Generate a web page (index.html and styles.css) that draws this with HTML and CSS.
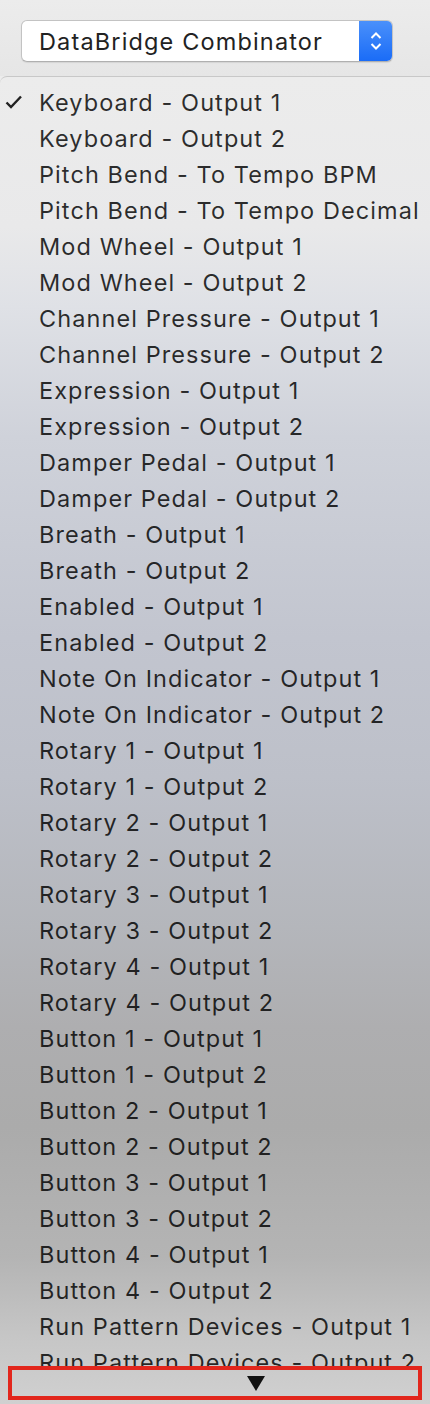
FILE: index.html
```html
<!DOCTYPE html>
<html>
<head>
<meta charset="utf-8">
<link rel="stylesheet" href="styles.css">
</head>
<body>
<div class="top">
  <div class="popup">
    <span class="popup-label">DataBridge Combinator</span>
    <span class="popup-btn">
      <svg width="14" height="22" viewBox="0 0 14 22"><path d="M2.5 8 L7 3.5 L11.5 8 M2.5 14 L7 18.5 L11.5 14" fill="none" stroke="#fff" stroke-width="2"/></svg>
    </span>
  </div>
</div>
<div class="menu">
  <ul class="list">
    <li class="item checked"><svg class="check" width="18" height="14" viewBox="0 0 18 14"><path d="M1.5 7.5 L6 12 L16 1.5" fill="none" stroke="#222" stroke-width="2.4"/></svg>Keyboard - Output 1</li>
    <li class="item">Keyboard - Output 2</li>
    <li class="item">Pitch Bend - To Tempo BPM</li>
    <li class="item">Pitch Bend - To Tempo Decimal</li>
    <li class="item">Mod Wheel - Output 1</li>
    <li class="item">Mod Wheel - Output 2</li>
    <li class="item">Channel Pressure - Output 1</li>
    <li class="item">Channel Pressure - Output 2</li>
    <li class="item">Expression - Output 1</li>
    <li class="item">Expression - Output 2</li>
    <li class="item">Damper Pedal - Output 1</li>
    <li class="item">Damper Pedal - Output 2</li>
    <li class="item">Breath - Output 1</li>
    <li class="item">Breath - Output 2</li>
    <li class="item">Enabled - Output 1</li>
    <li class="item">Enabled - Output 2</li>
    <li class="item">Note On Indicator - Output 1</li>
    <li class="item">Note On Indicator - Output 2</li>
    <li class="item">Rotary 1 - Output 1</li>
    <li class="item">Rotary 1 - Output 2</li>
    <li class="item">Rotary 2 - Output 1</li>
    <li class="item">Rotary 2 - Output 2</li>
    <li class="item">Rotary 3 - Output 1</li>
    <li class="item">Rotary 3 - Output 2</li>
    <li class="item">Rotary 4 - Output 1</li>
    <li class="item">Rotary 4 - Output 2</li>
    <li class="item">Button 1 - Output 1</li>
    <li class="item">Button 1 - Output 2</li>
    <li class="item">Button 2 - Output 1</li>
    <li class="item">Button 2 - Output 2</li>
    <li class="item">Button 3 - Output 1</li>
    <li class="item">Button 3 - Output 2</li>
    <li class="item">Button 4 - Output 1</li>
    <li class="item">Button 4 - Output 2</li>
    <li class="item">Run Pattern Devices - Output 1</li>
    <li class="item">Run Pattern Devices - Output 2</li>
  </ul>
  <div class="scroller">
    <div class="scroll-box"><span class="arrow"></span></div>
  </div>
</div>
</body>
</html>
```
FILE: styles.css
```css
html, body {
  margin: 0;
  padding: 0;
}
body {
  width: 430px;
  height: 1404px;
  overflow: hidden;
  background: #ececec;
  font-family: Inter, "Noto Sans", "Liberation Sans", sans-serif;
}
.top {
  height: 76px;
  box-sizing: border-box;
  padding: 20px 0 0 21px;
  background: linear-gradient(#ececec, #e6e6e6);
}
.popup {
  width: 372px;
  height: 42px;
  box-sizing: border-box;
  display: flex;
  align-items: stretch;
  background: #fff;
  border: 1px solid #c3c3c3;
  border-bottom-color: #b0b0b0;
  border-radius: 6px;
  overflow: hidden;
  box-shadow: 0 1px 1px rgba(0,0,0,0.08);
}
.popup-label {
  flex: 1;
  display: flex;
  align-items: center;
  padding-left: 17px;
  font-size: 23.5px;
  letter-spacing: 1.15px;
  color: #222;
}
.popup-btn {
  width: 33px;
  display: flex;
  align-items: center;
  justify-content: center;
  background: linear-gradient(#4a90fb, #1a6cf7);
}
.menu {
  border-top: 1px solid #c8c8c8;
  border-top-left-radius: 7px;
  background: linear-gradient(
    #ececec 0px,
    #e9e9ea 150px,
    #dfe1e6 230px,
    #cfd2da 360px,
    #c2c5cf 560px,
    #bdc0c9 700px,
    #b4b6bb 850px,
    #aeaeb0 950px,
    #ababab 1050px,
    #b4b4b4 1180px,
    #c6c6c6 1260px,
    #d0d0d0 1327px
  );
  height: 1327px;
}
.list {
  list-style: none;
  margin: 0;
  padding: 7px 0 0 0;
  height: 1289px;
  overflow: hidden;
  box-sizing: border-box;
}
.item {
  position: relative;
  height: 36px;
  display: flex;
  align-items: center;
  padding-left: 39px;
  font-size: 23.5px;
  letter-spacing: 1.08px;
  color: rgba(0,0,0,0.82);
  white-space: nowrap;
}
.check {
  position: absolute;
  left: 5px;
  top: 11px;
}
.scroller {
  height: 37px;
  padding: 0 8px;
}
.scroll-box {
  height: 34px;
  box-sizing: border-box;
  border: 4px solid #e2261c;
  display: flex;
  justify-content: center;
  align-items: center;
  padding-left: 82px;
}
.arrow {
  width: 0;
  height: 0;
  border-left: 9px solid transparent;
  border-right: 9px solid transparent;
  border-top: 15px solid #111;
}
```
